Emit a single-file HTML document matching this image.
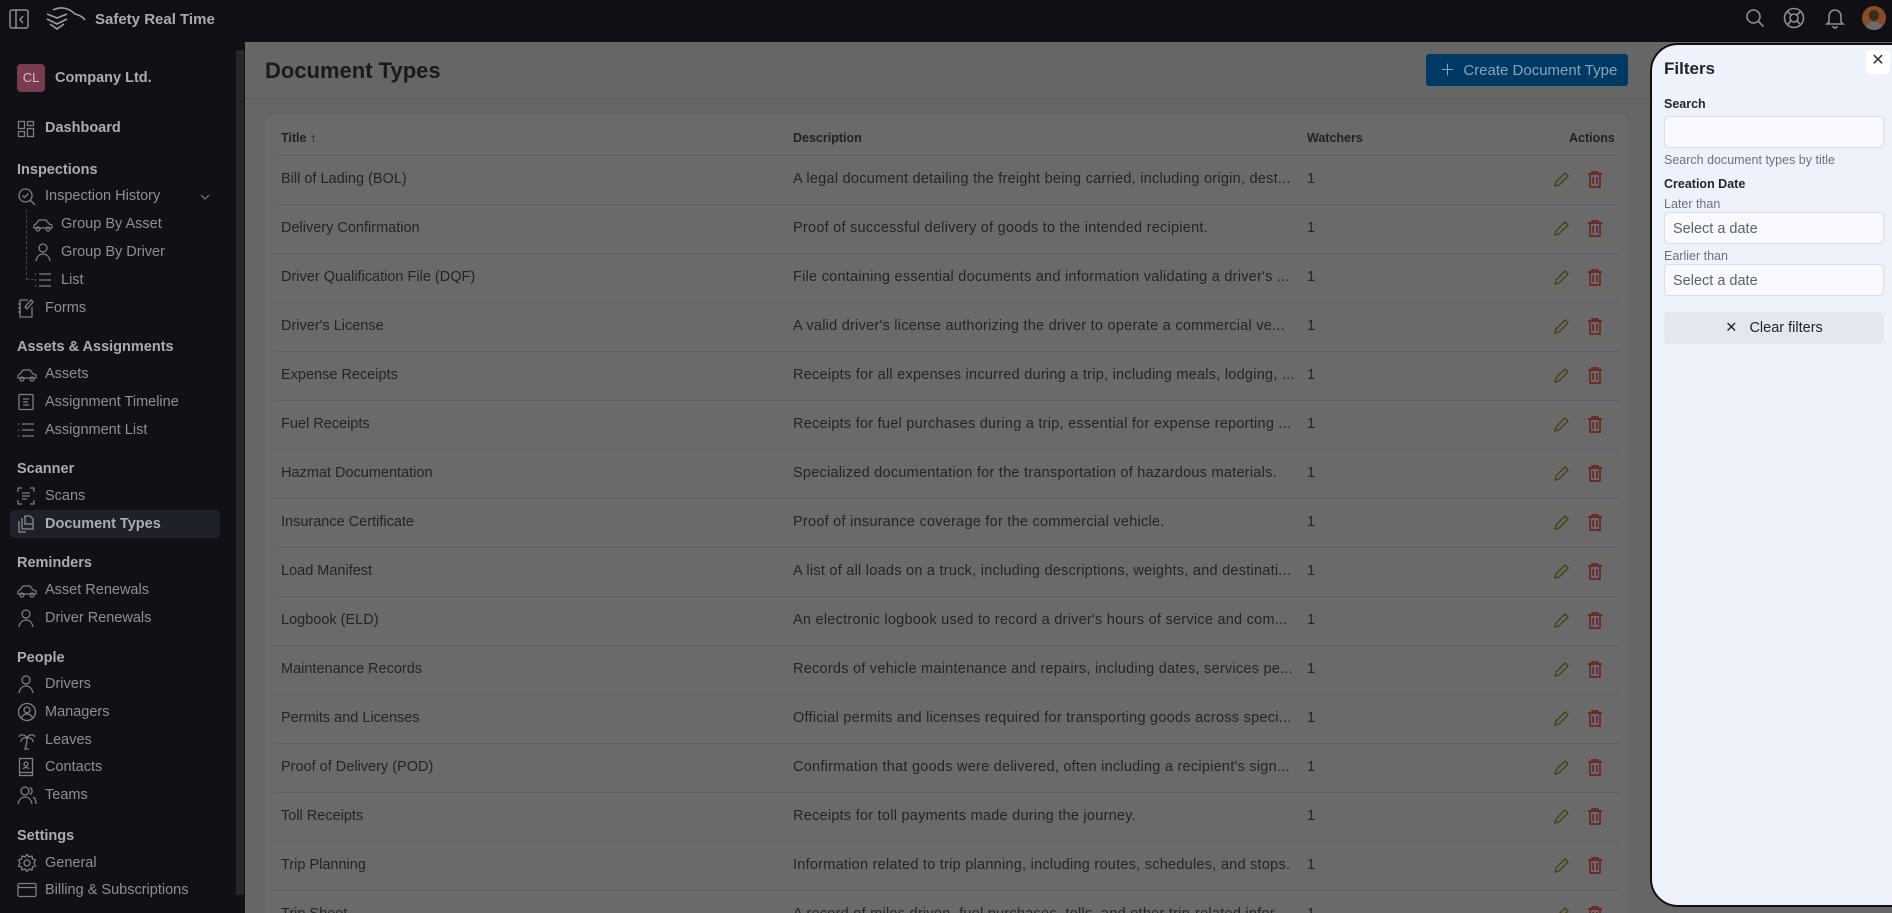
<!DOCTYPE html>
<html><head><meta charset="utf-8"><style>
*{box-sizing:border-box;margin:0;padding:0}
html,body{width:1892px;height:913px;overflow:hidden}
body{font-family:"Liberation Sans",sans-serif;background:#666;position:relative}
.top{position:absolute;left:0;top:0;width:1892px;height:42px;background:#0e1015}
.side{position:absolute;left:0;top:42px;width:245px;height:871px;background:#0f1116}
.sb{position:absolute;left:236px;top:50px;width:8px;height:845px;background:#25272c}
.si{position:absolute;left:45px;font-size:14.5px;color:#8b8f97;white-space:nowrap}
.sh{position:absolute;left:17px;font-size:14.5px;color:#a9adb3;font-weight:bold}
.ic{position:absolute;left:17px}
.main{position:absolute;left:245px;top:42px;width:1406px;height:871px;background:#666}
.hdr{position:absolute;left:245px;top:98px;width:1406px;height:1px;background:#5b5d66}
.card{position:absolute;left:265px;top:115px;width:1363px;height:798px;background:#6a6a6b;border-radius:8px 8px 0 0}
.row{position:absolute;left:273px;width:1347px;height:49px;border-top:1px solid #5e6070;font-size:14.5px;color:#242424}
.row span{position:absolute;top:15px;white-space:nowrap}
.row span.d{letter-spacing:0.25px}
.filt{position:absolute;left:1650px;top:43px;width:250px;height:864px;background:#eef3fb;border:2px solid #111;border-radius:28px 0 0 28px}
.lbl{position:absolute;left:1664px;font-size:12.5px;color:#1d2430}
.inp{position:absolute;left:1664px;width:220px;height:32px;background:#f7f9fc;border:1px solid #dce1e8;border-radius:4px;font-size:14.5px;color:#5a6272;padding:8px 0 0 8px}
#rows{position:absolute;left:0;top:0;width:1892px;height:913px;overflow:hidden}
</style></head><body>
<div class="top"></div>
<svg style="position:absolute;left:9px;top:9px" width="21" height="21" viewBox="0 0 21 21" fill="none" stroke="#8a8e96" stroke-width="1.5"><rect x="1" y="1" width="18" height="18" rx="2"/><path d="M7 1v18M14 7l-3 3.5 3 3.5"/></svg>
<svg style="position:absolute;left:45px;top:6px" width="42" height="26" viewBox="0 0 42 26" fill="none" stroke="#9a9ea5" stroke-width="1.6"><path d="M2 8l10 4 10-4M2 13l10 5 10-5M5 18l7 5 7-5M8 4c8-4 16-2 22 4 4 1 8 3 10 6"/></svg>
<div style="position:absolute;left:95px;top:11px;font-size:15px;font-weight:bold;color:#a8acb2">Safety Real Time</div>
<svg style="position:absolute;left:1745px;top:8px" width="20" height="20" viewBox="0 0 20 20" fill="none" stroke="#8a8e96" stroke-width="1.6"><circle cx="8.5" cy="8.5" r="6.5"/><path d="M13.5 13.5l5 5"/></svg>
<svg style="position:absolute;left:1783px;top:7px" width="22" height="22" viewBox="0 0 22 22" fill="none" stroke="#8a8e96" stroke-width="1.6"><circle cx="11" cy="11" r="9.5"/><circle cx="11" cy="11" r="4"/><path d="M4.5 4.5l3.5 3.5M17.5 4.5L14 8M4.5 17.5L8 14M17.5 17.5L14 14"/></svg>
<svg style="position:absolute;left:1825px;top:7px" width="20" height="22" viewBox="0 0 20 22" fill="none" stroke="#8a8e96" stroke-width="1.6"><path d="M4 15V9a6 6 0 0 1 12 0v6l2 2H2zM8 19a2 2 0 0 0 4 0"/></svg>
<div style="position:absolute;left:1862px;top:6px;width:24px;height:24px;border-radius:50%;background:#8a4a22;overflow:hidden"><div style="position:absolute;left:7px;top:4px;width:10px;height:11px;border-radius:50%;background:#3a2a22"></div><div style="position:absolute;left:4px;top:16px;width:16px;height:10px;background:#6a6d70;border-radius:6px 6px 0 0"></div></div>

<div class="side"></div><div class="sb"></div>
<div style="position:absolute;left:17px;top:64px;width:28px;height:28px;border-radius:4px;background:#7a3a52;color:#cfc0c6;font-size:13px;text-align:center;line-height:28px">CL</div>
<div style="position:absolute;left:55px;top:70px;font-size:14.5px;font-weight:bold;color:#a9adb3">Company Ltd.</div>
<div style="position:absolute;left:10px;top:510px;width:210px;height:28px;background:#1e2129;border-radius:4px"></div>

<div class="sh" style="left:45px;top:120px">Dashboard</div>
<svg class="ic" style="top:120px" width="18" height="18" viewBox="0 0 18 18" fill="none" stroke="#7b7f87" stroke-width="1.3"><rect x="1.5" y="1.5" width="6" height="7"/><rect x="10.5" y="1.5" width="6" height="4"/><rect x="1.5" y="11.5" width="6" height="5"/><rect x="10.5" y="8.5" width="6" height="8"/></svg>

<div class="sh" style="top:162px">Inspections</div>
<div class="si" style="top:188px">Inspection History</div>
<svg class="ic" style="top:187px" width="20" height="20" viewBox="0 0 20 20" fill="none" stroke="#7b7f87" stroke-width="1.3"><circle cx="8.5" cy="8.5" r="6.5"/><path d="M5.5 8.5l2 2 4-4M13 13l5 5"/></svg>
<svg style="position:absolute;left:200px;top:193px" width="10" height="8" viewBox="0 0 10 8" fill="none" stroke="#777" stroke-width="1.2"><path d="M1 2l4 4 4-4"/></svg>
<div style="position:absolute;left:26px;top:210px;width:8px;height:70px;border-left:1px dashed #444;border-bottom:1px dashed #444"></div>
<div class="si" style="left:61px;top:216px">Group By Asset</div>
<svg class="ic" style="left:33px;top:216px" width="20" height="18" viewBox="0 0 20 18" fill="none" stroke="#7b7f87" stroke-width="1.2"><path d="M1 12h18V9l-3-1-3-4H6L3 8 1 9z"/><circle cx="5" cy="13" r="2"/><circle cx="15" cy="13" r="2"/></svg>
<div class="si" style="left:61px;top:244px">Group By Driver</div>
<svg class="ic" style="left:34px;top:242px" width="18" height="20" viewBox="0 0 18 20" fill="none" stroke="#7b7f87" stroke-width="1.3"><circle cx="9" cy="6" r="4"/><path d="M2 19c1-5 4-7 7-7s6 2 7 7"/></svg>
<div class="si" style="left:61px;top:272px">List</div>
<svg class="ic" style="left:34px;top:272px" width="18" height="16" viewBox="0 0 18 16" fill="none" stroke="#7b7f87" stroke-width="1.3"><path d="M1 2h1M5 2h12M1 8h1M5 8h12M1 14h1M5 14h12"/></svg>
<div class="si" style="top:300px">Forms</div>
<svg class="ic" style="top:298px" width="18" height="20" viewBox="0 0 18 20" fill="none" stroke="#7b7f87" stroke-width="1.3"><path d="M3 2h8M3 2v17h12V9M1 6h3M1 10h3M1 14h3M10 11l6-7-2-2-6 7z"/></svg>

<div class="sh" style="top:339px">Assets &amp; Assignments</div>
<div class="si" style="top:366px">Assets</div>
<svg class="ic" style="top:366px" width="20" height="18" viewBox="0 0 20 18" fill="none" stroke="#7b7f87" stroke-width="1.2"><path d="M1 12h18V9l-3-1-3-4H6L3 8 1 9z"/><circle cx="5" cy="13" r="2"/><circle cx="15" cy="13" r="2"/></svg>
<div class="si" style="top:394px">Assignment Timeline</div>
<svg class="ic" style="top:393px" width="18" height="18" viewBox="0 0 18 18" fill="none" stroke="#7b7f87" stroke-width="1.3"><rect x="2" y="1.5" width="14" height="15" rx="1"/><path d="M6 6h6M6 9h5M6 12h6"/></svg>
<div class="si" style="top:422px">Assignment List</div>
<svg class="ic" style="top:422px" width="18" height="16" viewBox="0 0 18 16" fill="none" stroke="#7b7f87" stroke-width="1.3"><path d="M1 2h1M5 2h12M1 8h1M5 8h12M1 14h1M5 14h12"/></svg>

<div class="sh" style="top:461px">Scanner</div>
<div class="si" style="top:488px">Scans</div>
<svg class="ic" style="top:487px" width="18" height="18" viewBox="0 0 18 18" fill="none" stroke="#7b7f87" stroke-width="1.3"><path d="M1 5V1h4M13 1h4v4M1 13v4h4M13 17h4v-4M5 6h8M5 9h8M5 12h5"/></svg>
<div class="sh" style="left:45px;top:516px">Document Types</div>
<svg class="ic" style="top:514px" width="18" height="20" viewBox="0 0 18 20" fill="none" stroke="#8a8e96" stroke-width="1.3"><path d="M2 7v11h7M5 4v11h11V5l-3-3H8v2"/><path d="M8 2v8h8"/></svg>

<div class="sh" style="top:555px">Reminders</div>
<div class="si" style="top:582px">Asset Renewals</div>
<svg class="ic" style="top:582px" width="20" height="18" viewBox="0 0 20 18" fill="none" stroke="#7b7f87" stroke-width="1.2"><path d="M1 12h18V9l-3-1-3-4H6L3 8 1 9z"/><circle cx="5" cy="13" r="2"/><circle cx="15" cy="13" r="2"/></svg>
<div class="si" style="top:610px">Driver Renewals</div>
<svg class="ic" style="top:608px" width="18" height="20" viewBox="0 0 18 20" fill="none" stroke="#7b7f87" stroke-width="1.3"><circle cx="9" cy="6" r="4"/><path d="M2 19c1-5 4-7 7-7s6 2 7 7"/></svg>

<div class="sh" style="top:650px">People</div>
<div class="si" style="top:676px">Drivers</div>
<svg class="ic" style="top:674px" width="18" height="20" viewBox="0 0 18 20" fill="none" stroke="#7b7f87" stroke-width="1.3"><circle cx="9" cy="6" r="4"/><path d="M2 19c1-5 4-7 7-7s6 2 7 7"/></svg>
<div class="si" style="top:704px">Managers</div>
<svg class="ic" style="top:702px" width="20" height="20" viewBox="0 0 20 20" fill="none" stroke="#7b7f87" stroke-width="1.3"><circle cx="10" cy="10" r="8.5"/><circle cx="10" cy="8" r="3"/><path d="M4.5 16c1-3 3-4 5.5-4s4.5 1 5.5 4"/></svg>
<div class="si" style="top:732px">Leaves</div>
<svg class="ic" style="top:730px" width="20" height="20" viewBox="0 0 20 20" fill="none" stroke="#7b7f87" stroke-width="1.3"><path d="M10 8c0 4-1 8-2 11h4M10 8C8 4 3 4 2 7M10 8c2-4 7-4 8-1M10 8c-3-1-6 1-6 4M10 8c3-1 6 1 6 4"/></svg>
<div class="si" style="top:759px">Contacts</div>
<svg class="ic" style="top:757px" width="18" height="20" viewBox="0 0 18 20" fill="none" stroke="#7b7f87" stroke-width="1.3"><rect x="2.5" y="1.5" width="13" height="17"/><path d="M2.5 15.5h13"/><circle cx="9" cy="7" r="2"/><path d="M6 12c1-2 5-2 6 0"/></svg>
<div class="si" style="top:787px">Teams</div>
<svg class="ic" style="top:785px" width="20" height="20" viewBox="0 0 20 20" fill="none" stroke="#7b7f87" stroke-width="1.3"><circle cx="8" cy="6" r="4"/><path d="M1 19c1-5 4-7 7-7s6 2 7 7M13 2.5a4 4 0 0 1 0 7M16 12c2 1 3 4 3 7"/></svg>

<div class="sh" style="top:828px">Settings</div>
<div class="si" style="top:855px">General</div>
<svg class="ic" style="top:853px" width="20" height="20" viewBox="0 0 20 20" fill="none" stroke="#7b7f87" stroke-width="1.3"><circle cx="10" cy="10" r="3"/><path d="M10 1.5l2 2.5 3-1 .5 3 3 1-1.5 3 1.5 3-3 1-.5 3-3-1-2 2.5-2-2.5-3 1-.5-3-3-1 1.5-3-1.5-3 3-1 .5-3 3 1z"/></svg>
<div class="si" style="top:882px">Billing &amp; Subscriptions</div>
<svg class="ic" style="top:882px" width="20" height="16" viewBox="0 0 20 16" fill="none" stroke="#7b7f87" stroke-width="1.3"><rect x="1" y="1.5" width="18" height="13" rx="1.5"/><path d="M1 5.5h18"/></svg>

<div class="main"></div><div class="hdr"></div>
<div style="position:absolute;left:265px;top:58px;font-size:22px;font-weight:bold;color:#1a1a1a">Document Types</div>
<div style="position:absolute;left:1426px;top:54px;width:202px;height:32px;background:#003a64;border-radius:3px;color:#8aa3ba;font-size:15px;line-height:33px;padding-left:14px">＋&nbsp; Create Document Type</div>
<div class="card"></div>
<div style="position:absolute;left:281px;top:131px;font-size:12.5px;font-weight:bold;color:#222">Title ↑</div>
<div style="position:absolute;left:793px;top:131px;font-size:12.5px;font-weight:bold;color:#222">Description</div>
<div style="position:absolute;left:1307px;top:131px;font-size:12.5px;font-weight:bold;color:#222">Watchers</div>
<div style="position:absolute;left:1569px;top:131px;font-size:12.5px;font-weight:bold;color:#222">Actions</div>
<div id="rows"></div>
<script>
var d=[["Bill of Lading (BOL)","A legal document detailing the freight being carried, including origin, dest..."],["Delivery Confirmation","Proof of successful delivery of goods to the intended recipient."],["Driver Qualification File (DQF)","File containing essential documents and information validating a driver's ..."],["Driver's License","A valid driver's license authorizing the driver to operate a commercial ve..."],["Expense Receipts","Receipts for all expenses incurred during a trip, including meals, lodging, ..."],["Fuel Receipts","Receipts for fuel purchases during a trip, essential for expense reporting ..."],["Hazmat Documentation","Specialized documentation for the transportation of hazardous materials."],["Insurance Certificate","Proof of insurance coverage for the commercial vehicle."],["Load Manifest","A list of all loads on a truck, including descriptions, weights, and destinati..."],["Logbook (ELD)","An electronic logbook used to record a driver's hours of service and com..."],["Maintenance Records","Records of vehicle maintenance and repairs, including dates, services pe..."],["Permits and Licenses","Official permits and licenses required for transporting goods across speci..."],["Proof of Delivery (POD)","Confirmation that goods were delivered, often including a recipient's sign..."],["Toll Receipts","Receipts for toll payments made during the journey."],["Trip Planning","Information related to trip planning, including routes, schedules, and stops."],["Trip Sheet","A record of miles driven, fuel purchases, tolls, and other trip-related infor..."]];
var h="";d.forEach(function(r,i){var t=155+i*49;h+='<div class="row" style="top:'+t+'px"><span style="left:8px">'+r[0]+'</span><span class="d" style="left:520px">'+r[1]+'</span><span style="left:1034px">1</span>'+
'<svg style="position:absolute;left:1279px;top:15px" width="18" height="18" viewBox="0 0 18 18" fill="none" stroke="#4a4010" stroke-width="1.4"><path d="M3 15l1-4 9-9 3 3-9 9z"/></svg>'+
'<svg style="position:absolute;left:1314px;top:14px" width="16" height="18" viewBox="0 0 16 18" fill="none" stroke="#6a1a1a" stroke-width="1.4"><path d="M1 4h14M5 4V2h6v2M3 4v13h10V4M6 7v7M10 7v7"/></svg></div>'});
document.getElementById("rows").innerHTML=h;
</script>

<div class="filt"></div>
<div style="position:absolute;left:1866px;top:50px;width:24px;height:24px;background:#fff;border-radius:4px;font-size:16px;color:#333;text-align:center;line-height:22px">✕</div>
<div style="position:absolute;left:1664px;top:59px;font-size:17px;font-weight:bold;color:#1d2430">Filters</div>
<div class="lbl" style="top:97px;font-weight:bold">Search</div>
<div class="inp" style="top:116px"></div>
<div class="lbl" style="top:153px;color:#6a7280">Search document types by title</div>
<div class="lbl" style="top:177px;font-weight:bold">Creation Date</div>
<div class="lbl" style="top:197px;color:#6a7280">Later than</div>
<div class="inp" style="top:212px">Select a date</div>
<div class="lbl" style="top:249px;color:#6a7280">Earlier than</div>
<div class="inp" style="top:264px">Select a date</div>
<div style="position:absolute;left:1664px;top:312px;width:220px;height:32px;background:#e3e7ee;border-radius:4px;text-align:center;line-height:32px;font-size:14.5px;color:#1d2430">✕&nbsp;&nbsp; Clear filters</div>
</body></html>
